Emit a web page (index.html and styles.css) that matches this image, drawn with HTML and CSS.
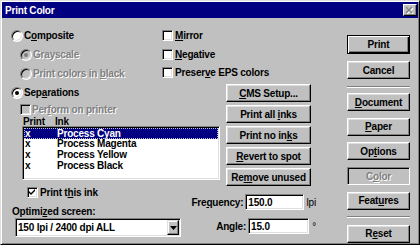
FILE: index.html
```html
<!DOCTYPE html>
<html lang="en">
<head>
    <meta charset="UTF-8">
    <title>Print Color</title>
    <link rel="stylesheet" href="styles.css">
</head>
<body>
    <div class="window">
        <div class="titlebar">
            <span class="title">Print Color</span>
            <span class="close">
                <svg width="8" height="7" viewBox="0 0 8 7">
                    <path d="M1 1 L7 7 M7 1 L1 7" stroke="#fff" stroke-width="1.4"/>
                    <path d="M0 0 L6 6 M6 0 L0 6" stroke="#808080" stroke-width="1.4"/>
                </svg>
            </span>
        </div>
        <div class="dialog">
            <div class="main">
                <div class="top">
                    <div class="modes">
                        <label class="opt"><span class="radio"></span><span>C<u>o</u>mposite</span></label>
                        <label class="opt sub disabled"><span class="radio on"></span><span>Grayscale</span></label>
                        <label class="opt sub disabled"><span class="radio"></span><span>Print colors in <u>b</u>lack</span></label>
                    </div>
                    <div class="flags">
                        <label class="opt"><span class="check"></span><span><u>M</u>irror</span></label>
                        <label class="opt"><span class="check"></span><span><u>N</u>egative</span></label>
                        <label class="opt short"><span class="check"></span><span>Preser<u>v</u>e EPS colors</span></label>
                    </div>
                </div>
                <div class="lower">
                    <div class="inks">
                        <label class="opt"><span class="radio on"></span><span>Sep<u>a</u>rations</span></label>
                        <label class="opt perform disabled"><span class="check"></span><span>Per<u>f</u>orm on printer</span></label>
                        <div class="ink-head"><span class="col-print">Print</span><span>Ink</span></div>
                        <ul class="ink-list">
                            <li class="selected"><span class="col-print">x</span>Process Cyan</li>
                            <li><span class="col-print">x</span>Process Magenta</li>
                            <li><span class="col-print">x</span>Process Yellow</li>
                            <li><span class="col-print">x</span>Process Black</li>
                        </ul>
                        <label class="opt print-ink">
                            <span class="check">
                                <svg width="7" height="7" viewBox="0 0 7 7"><path d="M0 2 L2 4 L6 0 L6 2 L2 6 L0 4 Z"/></svg>
                            </span>
                            <span>Print t<u>h</u>is ink</span>
                        </label>
                        <div class="screen-label">Optimi<u>z</u>ed screen:</div>
                        <div class="select">
                            <span>150 lpi / 2400 dpi ALL</span>
                            <span class="drop">
                                <svg width="7" height="4" viewBox="0 0 7 4"><path d="M0 0 H7 L3.5 4 Z"/></svg>
                            </span>
                        </div>
                    </div>
                    <div class="ink-actions">
                        <button class="btn"><span><u>C</u>MS Setup...</span></button>
                        <button class="btn"><span>Print all <u>i</u>nks</span></button>
                        <button class="btn"><span>Print no in<u>k</u>s</span></button>
                        <button class="btn"><span><u>R</u>evert to spot</span></button>
                        <button class="btn"><span>Re<u>m</u>ove unused</span></button>
                        <div class="field first">
                            <span class="field-label">Fre<u>q</u>uency:</span>
                            <span class="input">150.0</span>
                            <span class="unit">lpi</span>
                        </div>
                        <div class="field">
                            <span class="field-label">Angle:</span>
                            <span class="input">15.0</span>
                            <span class="unit">°</span>
                        </div>
                    </div>
                </div>
            </div>
            <div class="side">
                <button class="btn default">Print</button>
                <button class="btn cancel">Cancel</button>
                <div class="rule"></div>
                <div class="nav">
                    <button class="btn"><span><u>D</u>ocument</span></button>
                    <button class="btn"><span><u>P</u>aper</span></button>
                    <button class="btn"><span>Op<u>t</u>ions</span></button>
                    <button class="btn off"><span>C<u>o</u>lor</span></button>
                    <button class="btn"><span>Feat<u>u</u>res</span></button>
                </div>
                <div class="rule lower-rule"></div>
                <button class="btn reset"><span>R<u>e</u>set</span></button>
            </div>
        </div>
    </div>
</body>
</html>
```

FILE: styles.css
```css
* {
    margin: 0;
    padding: 0;
    box-sizing: border-box;
}

body {
    background-color: #c0c0c0;
    font-family: "Liberation Sans", Arial, sans-serif;
    font-size: 10px;
    font-weight: bold;
    letter-spacing: -0.2px;
    color: #000;
}

u {
    text-decoration: underline;
    text-underline-offset: 1px;
}

.window {
    width: 420px;
    height: 245px;
    padding: 1px;
    background-color: #c0c0c0;
    border: 1px solid;
    border-color: #dfdfdf #000 #000 #dfdfdf;
    box-shadow: inset 1px 1px #fff, inset -1px -1px #808080;
}

.titlebar {
    height: 16px;
    padding: 0 1px 0 3px;
    display: flex;
    align-items: center;
    justify-content: space-between;
    background-color: #000080;
    color: #fff;
}

.close {
    width: 14px;
    height: 12px;
    display: flex;
    align-items: center;
    justify-content: center;
    background-color: #c0c0c0;
    border: 1px solid;
    border-color: #fff #000 #000 #fff;
    box-shadow: inset -1px -1px #808080;
}

.dialog {
    display: flex;
    padding: 8px 0 0 9px;
}

.main {
    width: 305px;
}

.top {
    display: flex;
}

.modes {
    width: 151px;
}

.opt {
    height: 19px;
    display: flex;
    align-items: center;
    gap: 1px;
    white-space: nowrap;
}

.opt.sub {
    padding-left: 9px;
}

.flags .opt {
    gap: 2px;
}

.flags .opt.short {
    height: 17px;
}

.disabled {
    color: #808080;
    text-shadow: 1px 1px #fff;
}

.radio {
    width: 12px;
    height: 12px;
    flex: none;
    display: flex;
    align-items: center;
    justify-content: center;
    border-radius: 50%;
    background-color: #fff;
    border: 1px solid;
    border-color: #808080 #fff #fff #808080;
    box-shadow: inset 1px 1px #000, inset -1px -1px #dfdfdf;
}

.radio.on::after {
    content: "";
    width: 4px;
    height: 4px;
    border-radius: 50%;
    background-color: #000;
}

.disabled .radio {
    background-color: #c0c0c0;
}

.disabled .radio.on::after {
    background-color: #808080;
}

.check {
    width: 11px;
    height: 11px;
    flex: none;
    display: flex;
    align-items: center;
    justify-content: center;
    background-color: #fff;
    border: 1px solid;
    border-color: #808080 #fff #fff #808080;
    box-shadow: inset 1px 1px #000, inset -1px -1px #dfdfdf;
}

.disabled .check {
    background-color: #c0c0c0;
}

.lower {
    display: flex;
}

.inks {
    width: 209px;
}

.opt.perform {
    height: 14px;
    padding-left: 9px;
}

.ink-head {
    height: 10px;
    padding-left: 12px;
    display: flex;
    align-items: center;
}

.ink-head .col-print {
    width: 32px;
}

.ink-list {
    list-style: none;
    width: 198px;
    height: 54px;
    margin-left: 11px;
    padding: 1px;
    background-color: #fff;
    border: 1px solid;
    border-color: #808080 #fff #fff #808080;
    box-shadow: inset 1px 1px #000, inset -1px -1px #dfdfdf;
}

.ink-list li {
    height: 10.67px;
    display: flex;
    align-items: center;
    white-space: nowrap;
}

.ink-list .col-print {
    width: 33px;
    padding-left: 1px;
}

.ink-list li.selected {
    background-color: #000080;
    color: #fff;
    outline: 1px dotted #c0c0c0;
    outline-offset: -1px;
}

.opt.print-ink {
    height: 18px;
    margin-top: 3px;
    padding-left: 16px;
    gap: 2px;
}

.print-ink svg {
    fill: #000;
}

.screen-label {
    height: 17px;
    padding: 4px 0 0 1px;
    line-height: 13px;
}

.select {
    width: 166px;
    height: 19px;
    margin-left: 4px;
    padding: 1px 1px 1px 2px;
    display: flex;
    align-items: center;
    justify-content: space-between;
    background-color: #fff;
    border: 1px solid;
    border-color: #808080 #fff #fff #808080;
    box-shadow: inset 1px 1px #000, inset -1px -1px #dfdfdf;
}

.drop {
    width: 12px;
    height: 15px;
    display: flex;
    align-items: center;
    justify-content: center;
    background-color: #c0c0c0;
    border: 1px solid;
    border-color: #dfdfdf #000 #000 #dfdfdf;
    box-shadow: inset -1px -1px #808080, inset 1px 1px #fff;
}

.ink-actions {
    width: 90px;
    margin-left: 6px;
    padding-top: 1px;
    display: flex;
    flex-direction: column;
    gap: 3px;
}

.btn {
    height: 18px;
    display: flex;
    align-items: center;
    justify-content: center;
    font: inherit;
    letter-spacing: inherit;
    color: #000;
    white-space: nowrap;
    background-color: #c0c0c0;
    border: 1px solid;
    border-color: #fff #000 #000 #fff;
    box-shadow: inset -1px -1px #808080, inset 1px 1px #dfdfdf;
}

.ink-actions .btn {
    width: 85px;
}

.field {
    height: 16px;
    margin-left: -35px;
    display: flex;
    align-items: center;
    white-space: nowrap;
}

.field.first {
    margin-top: 5px;
}

.field + .field {
    margin-top: 5px;
}

.field-label {
    width: 56px;
    text-align: right;
}

.input {
    width: 62px;
    height: 16px;
    margin-left: 2px;
    padding-left: 2px;
    display: flex;
    align-items: center;
    background-color: #fff;
    border: 1px solid;
    border-color: #808080 #fff #fff #808080;
    box-shadow: inset 1px 1px #000, inset -1px -1px #dfdfdf;
}

.unit {
    margin-left: 3px;
    font-weight: normal;
}

.side {
    width: 63px;
    margin-left: 31px;
    padding-top: 9px;
    display: flex;
    flex-direction: column;
}

.btn.default {
    height: 19px;
    border-color: #000;
    box-shadow: inset 1px 1px #fff, inset -1px -1px #000, inset -2px -2px #808080;
}

.btn.cancel {
    margin-top: 7px;
}

.rule {
    height: 2px;
    margin-top: 7px;
    border-top: 1px solid #808080;
    border-bottom: 1px solid #fff;
}

.nav {
    margin-top: 5px;
    display: flex;
    flex-direction: column;
    gap: 6.7px;
}

.btn.off {
    color: #808080;
    text-shadow: 1px 1px #fff;
    border-color: #808080 #fff #fff #808080;
    box-shadow: inset 1px 1px #000;
}

.rule.lower-rule {
    margin-top: 6px;
}

.btn.reset {
    margin-top: 7px;
}
```
